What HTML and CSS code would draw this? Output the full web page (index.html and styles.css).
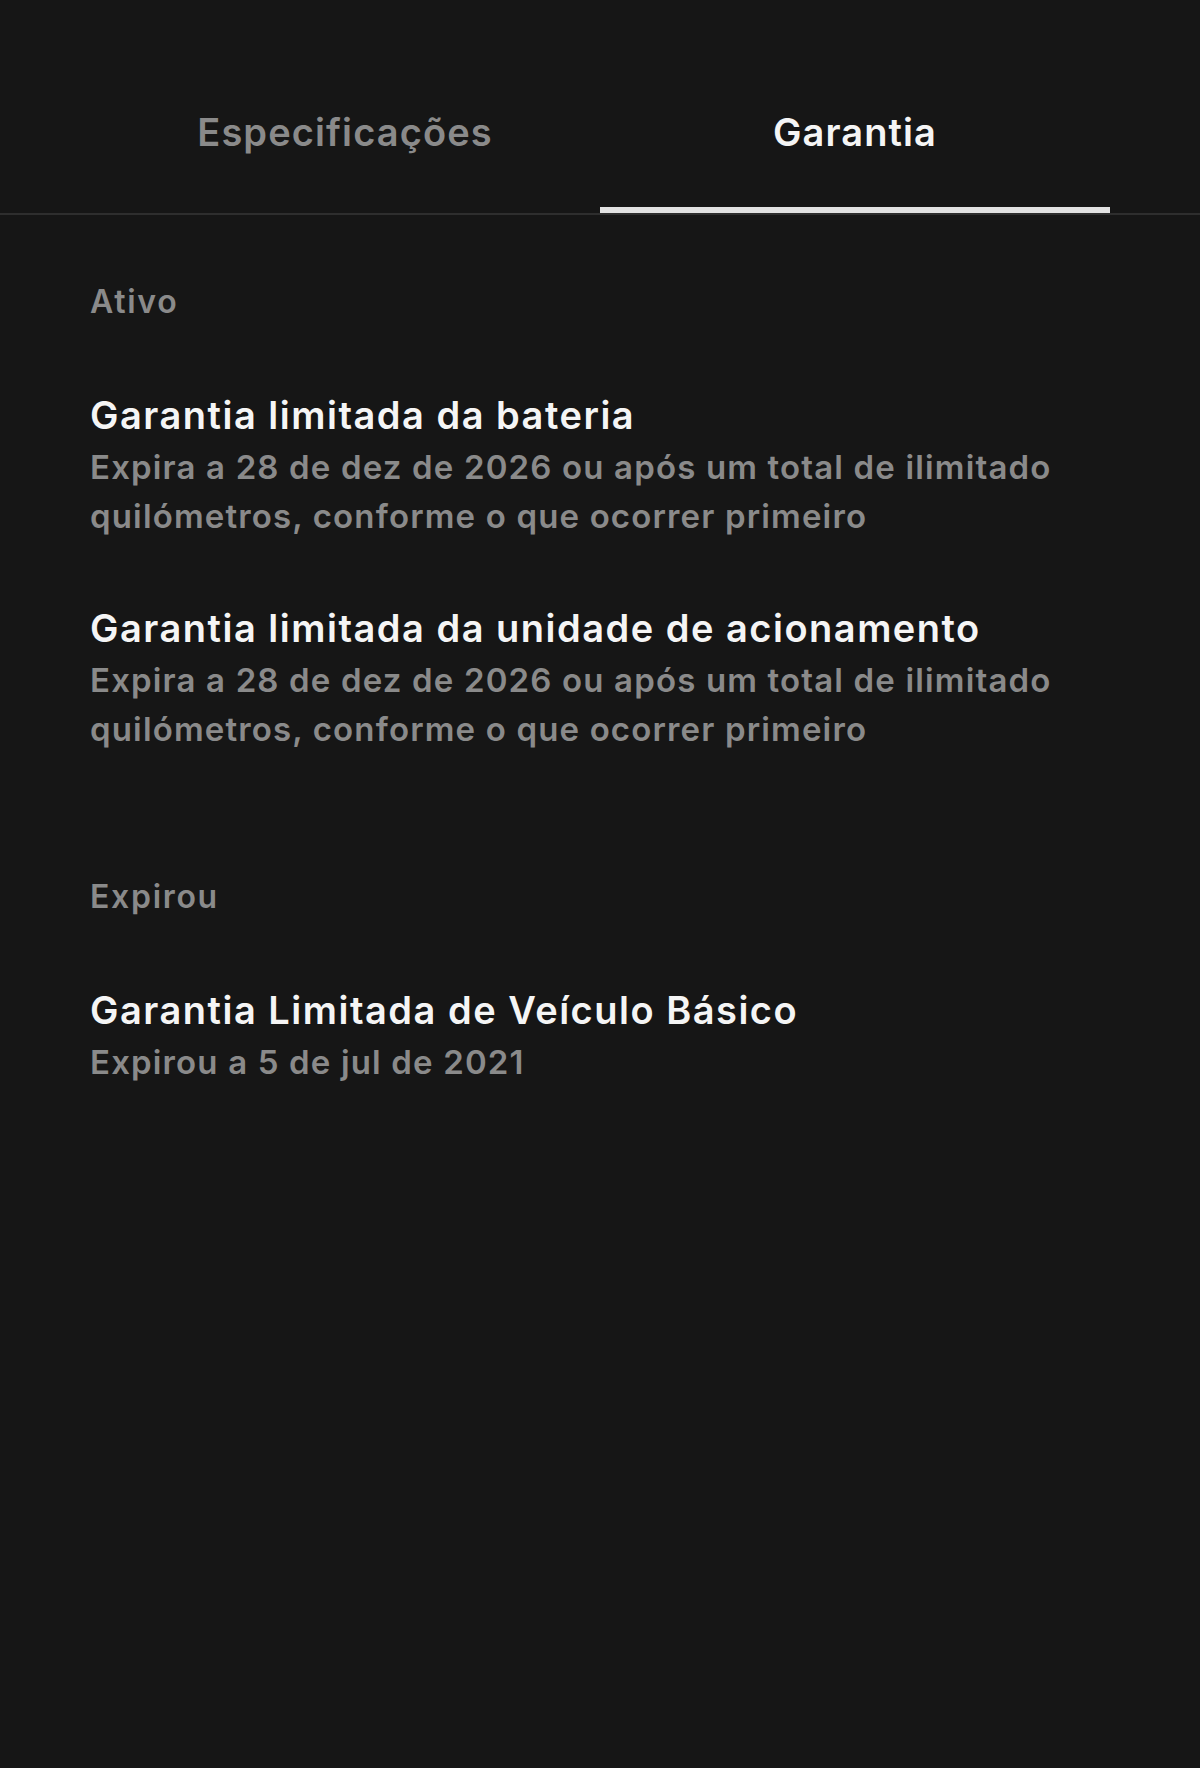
FILE: index.html
```html
<!DOCTYPE html>
<html lang="pt">
    <head>
        <meta charset="UTF-8">
        <meta name="viewport" content="width=device-width, initial-scale=1.0">
        <title>Garantia</title>
        <link rel="stylesheet" href="styles.css">
    </head>
    <body>
        <div class="tabs">
            <div class="tab">Especificações</div>
            <div class="tab active">Garantia</div>
        </div>

        <div class="content">
            <div class="section">
                <h3 class="section-label">Ativo</h3>
                <div class="item">
                    <div class="item-title">Garantia limitada da bateria</div>
                    <div class="item-desc">Expira a 28 de dez de 2026 ou após um total de ilimitado quilómetros, conforme o que ocorrer primeiro</div>
                </div>
                <div class="item">
                    <div class="item-title">Garantia limitada da unidade de acionamento</div>
                    <div class="item-desc">Expira a 28 de dez de 2026 ou após um total de ilimitado quilómetros, conforme o que ocorrer primeiro</div>
                </div>
            </div>

            <div class="section expired">
                <h3 class="section-label">Expirou</h3>
                <div class="item">
                    <div class="item-title">Garantia Limitada de Veículo Básico</div>
                    <div class="item-desc">Expirou a 5 de jul de 2021</div>
                </div>
            </div>
        </div>
    </body>
</html>
```

FILE: styles.css
```css
body {
    margin: 0;
    background-color: #161616;
    color: #f2f2f2;
    font-family: Inter, "Noto Sans", sans-serif;
    min-height: 1768px;
}

.tabs {
    display: flex;
    padding: 0 90px;
    border-bottom: 2px solid #2e2e2e;
}

.tab {
    flex: 1;
    text-align: center;
    font-size: 38px;
    font-weight: 600;
    letter-spacing: 1.1px;
    line-height: 50px;
    padding: 107px 0 50px;
    color: #8a8a8a;
    border-bottom: 6px solid transparent;
}

.tab.active {
    color: #f5f5f5;
    border-bottom-color: #e2e2e2;
}

.content {
    padding: 67px 90px 0;
    max-width: 1010px;
}

.section-label {
    margin: 0;
    font-size: 32px;
    font-weight: 600;
    letter-spacing: 1.7px;
    line-height: 40px;
    color: #8a8a8a;
}

.item {
    margin-top: 60px;
}

.section-label + .item {
    margin-top: 66px;
}

.item-title {
    font-size: 38px;
    font-weight: 600;
    letter-spacing: 1.5px;
    line-height: 55px;
    color: #f5f5f5;
}

.item-desc {
    font-size: 33px;
    font-weight: 600;
    letter-spacing: 1.15px;
    line-height: 49px;
    color: #8a8a8a;
}

.expired {
    margin-top: 123px;
}
```
